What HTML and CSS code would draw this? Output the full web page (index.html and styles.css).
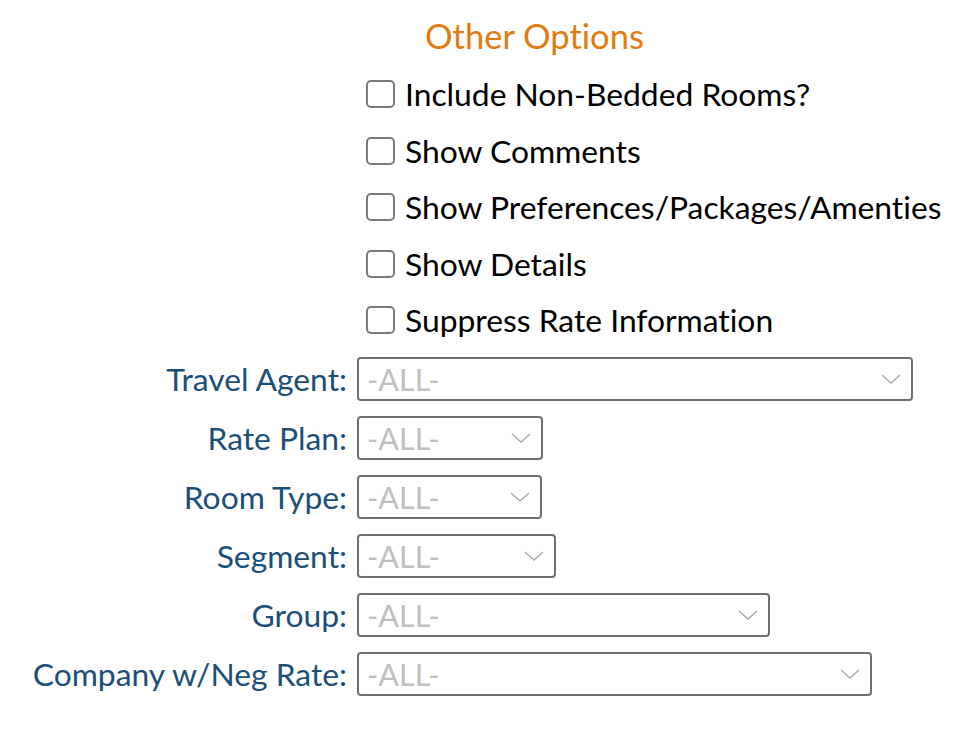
FILE: index.html
```html
<!DOCTYPE html>
<html lang="en">
<head>
<meta charset="UTF-8">
<title>Other Options</title>
<link rel="stylesheet" href="styles.css">
</head>
<body>
  <div class="options">
    <h2 class="options-title">Other Options</h2>

    <div class="checks">
      <label class="check"><span class="box"></span>Include Non-Bedded Rooms?</label>
      <label class="check"><span class="box"></span>Show Comments</label>
      <label class="check"><span class="box"></span>Show Preferences/Packages/Amenties</label>
      <label class="check"><span class="box"></span>Show Details</label>
      <label class="check"><span class="box"></span>Suppress Rate Information</label>
    </div>

    <div class="fields">
      <label class="field-label">Travel Agent:</label>
      <div class="select w-agent">-ALL-<svg class="chev" viewBox="0 0 20 10"><path d="M1 1 L10 9 L19 1"/></svg></div>

      <label class="field-label">Rate Plan:</label>
      <div class="select w-rate">-ALL-<svg class="chev" viewBox="0 0 20 10"><path d="M1 1 L10 9 L19 1"/></svg></div>

      <label class="field-label">Room Type:</label>
      <div class="select w-room">-ALL-<svg class="chev" viewBox="0 0 20 10"><path d="M1 1 L10 9 L19 1"/></svg></div>

      <label class="field-label">Segment:</label>
      <div class="select w-seg">-ALL-<svg class="chev" viewBox="0 0 20 10"><path d="M1 1 L10 9 L19 1"/></svg></div>

      <label class="field-label">Group:</label>
      <div class="select w-group">-ALL-<svg class="chev" viewBox="0 0 20 10"><path d="M1 1 L10 9 L19 1"/></svg></div>

      <label class="field-label">Company w/Neg Rate:</label>
      <div class="select w-company">-ALL-<svg class="chev" viewBox="0 0 20 10"><path d="M1 1 L10 9 L19 1"/></svg></div>
    </div>
  </div>
</body>
</html>
```

FILE: styles.css
```css
body {
  font-family: Lato, "Open Sans", sans-serif;
  font-variant-ligatures: none;
  background-color: #fff;
  margin: 0;
}
.options {
  padding-top: 16px;
}
.options-title {
  color: #e07c10;
  font-size: 34.5px;
  font-weight: normal;
  margin: 0 0 0 425px;
  line-height: 40px;
}
.checks {
  display: flex;
  flex-direction: column;
  margin-left: 366px;
  margin-top: 10px;
}
.check {
  display: flex;
  align-items: center;
  height: 56.5px;
  font-size: 31.8px;
  color: #000;
}
.box {
  width: 25px;
  height: 24px;
  border: 2px solid #7a7a7a;
  border-radius: 5px;
  margin-right: 10px;
  flex-shrink: 0;
}
.fields {
  display: grid;
  grid-template-columns: 347px auto;
  column-gap: 10px;
  row-gap: 15px;
  align-items: center;
  justify-items: start;
  margin-top: 8px;
}
.field-label {
  justify-self: end;
  font-size: 31.8px;
  color: #1b4f7a;
}
.select {
  box-sizing: border-box;
  height: 44px;
  border: 2px solid #707070;
  border-radius: 4px;
  display: flex;
  align-items: center;
  justify-content: space-between;
  padding: 0 10px 0 8px;
  font-size: 30.5px;
  color: #bfbfbf;
}
.chev {
  width: 20px;
  height: 10px;
  fill: none;
  stroke: #a8a8a8;
  stroke-width: 1.4;
}
.w-agent { width: 556px; }
.w-rate { width: 186px; }
.w-room { width: 185px; }
.w-seg { width: 199px; }
.w-group { width: 413px; }
.w-company { width: 515px; }
```
